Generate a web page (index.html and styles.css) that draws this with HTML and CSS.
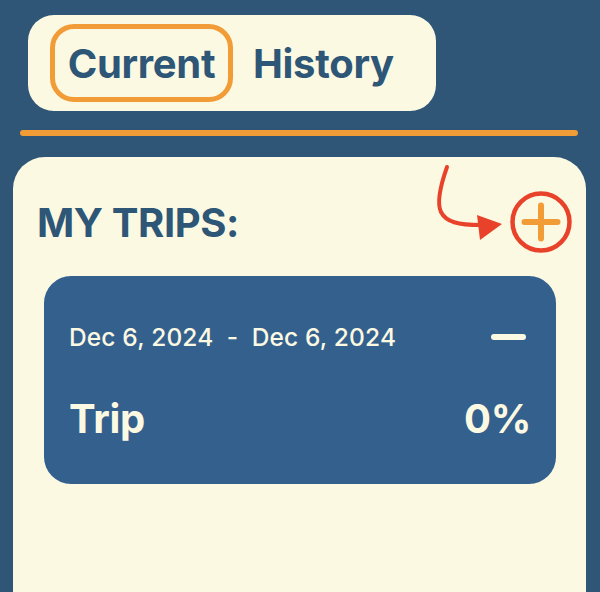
FILE: index.html
```html
<!DOCTYPE html>
<html>
<head>
<meta charset="utf-8">
<link rel="stylesheet" href="styles.css">
</head>
<body>
<div class="screen">
  <div class="top">
    <div class="tabs">
      <div class="tab tab-active">Current</div>
      <div class="tab">History</div>
    </div>
  </div>
  <div class="divider"></div>
  <div class="panel">
    <svg class="hint-arrow" width="90" height="90" viewBox="0 0 90 90">
      <path d="M14 5 C 8 22, 3 40, 8 50 C 13 60, 25 63, 48 63" fill="none" stroke="#e8432a" stroke-width="4" stroke-linecap="round"/>
      <polygon points="44,53 69,62 47,78" fill="#e8432a"/>
    </svg>
    <div class="panel-head">
      <h1 class="title">MY TRIPS:</h1>
      <svg class="add-btn" width="64" height="64" viewBox="0 0 64 64">
        <circle cx="32" cy="32" r="28.5" fill="none" stroke="#e8432a" stroke-width="4.5"/>
        <path d="M15.5 32 H48.5 M32 15.5 V48.5" stroke="#f29c38" stroke-width="6" stroke-linecap="round"/>
      </svg>
    </div>
    <div class="trip-card">
      <div class="trip-row dates-row">
        <span class="dates">Dec 6, 2024  -  Dec 6, 2024</span>
        <span class="minus"></span>
      </div>
      <div class="trip-row name-row">
        <span class="trip-name">Trip</span>
        <span class="trip-pct">0%</span>
      </div>
    </div>
  </div>
</div>
</body>
</html>
```
FILE: styles.css
```css
* { box-sizing: border-box; }
html, body {
  margin: 0;
  padding: 0;
  background: #2f5676;
  font-family: Inter, "Noto Sans", sans-serif;
}
.screen {
  width: 600px;
  height: 592px;
  overflow: hidden;
  display: flex;
  flex-direction: column;
}
.top {
  padding: 15px 0 0 28px;
}
.tabs {
  display: inline-flex;
  align-items: center;
  gap: 20px;
  width: 408px;
  height: 96px;
  padding: 0 22px;
  background: #fcf9e3;
  border-radius: 26px;
}
.tab {
  font-size: 40px;
  font-weight: 700;
  color: #2e5677;
  letter-spacing: -0.3px;
}
.tab-active {
  width: 183px;
  height: 78px;
  border: 5px solid #f29c38;
  border-radius: 24px;
  display: flex;
  align-items: center;
  justify-content: center;
}
.divider {
  height: 6px;
  margin: 19px 22px 0 20px;
  background: #f29c38;
  border-radius: 3px;
}
.panel {
  position: relative;
  margin: 21px 14px 0 13px;
  flex: 1;
  background: #fcf9e3;
  border-radius: 32px 32px 0 0;
  padding: 34px 14px 0 24px;
}
.hint-arrow {
  position: absolute;
  left: 420px;
  top: 5px;
}
.panel-head {
  display: flex;
  align-items: center;
  justify-content: space-between;
  height: 62px;
}
.title {
  margin: 0;
  font-size: 40px;
  font-weight: 700;
  color: #2e5677;
  letter-spacing: -0.4px;
}
.add-btn {
  display: block;
  margin-right: -1px;
}
.trip-card {
  margin: 23px 16px 0 7px;
  height: 208px;
  background: #34608e;
  border-radius: 27px;
  padding: 46px 27px 0 25px;
  color: #fcf9e3;
}
.trip-row {
  display: flex;
  align-items: center;
  justify-content: space-between;
}
.dates-row {
  height: 30px;
}
.dates {
  font-size: 24.5px;
  font-weight: 500;
  letter-spacing: 0.15px;
  white-space: pre;
}
.minus {
  width: 35px;
  height: 6px;
  border-radius: 3px;
  background: #fcf9e3;
  margin-right: 3px;
}
.name-row {
  margin-top: 41px;
  height: 50px;
}
.trip-name, .trip-pct {
  font-size: 40px;
  font-weight: 700;
  letter-spacing: -0.3px;
}
.trip-pct {
  margin-right: -2px;
}
```
